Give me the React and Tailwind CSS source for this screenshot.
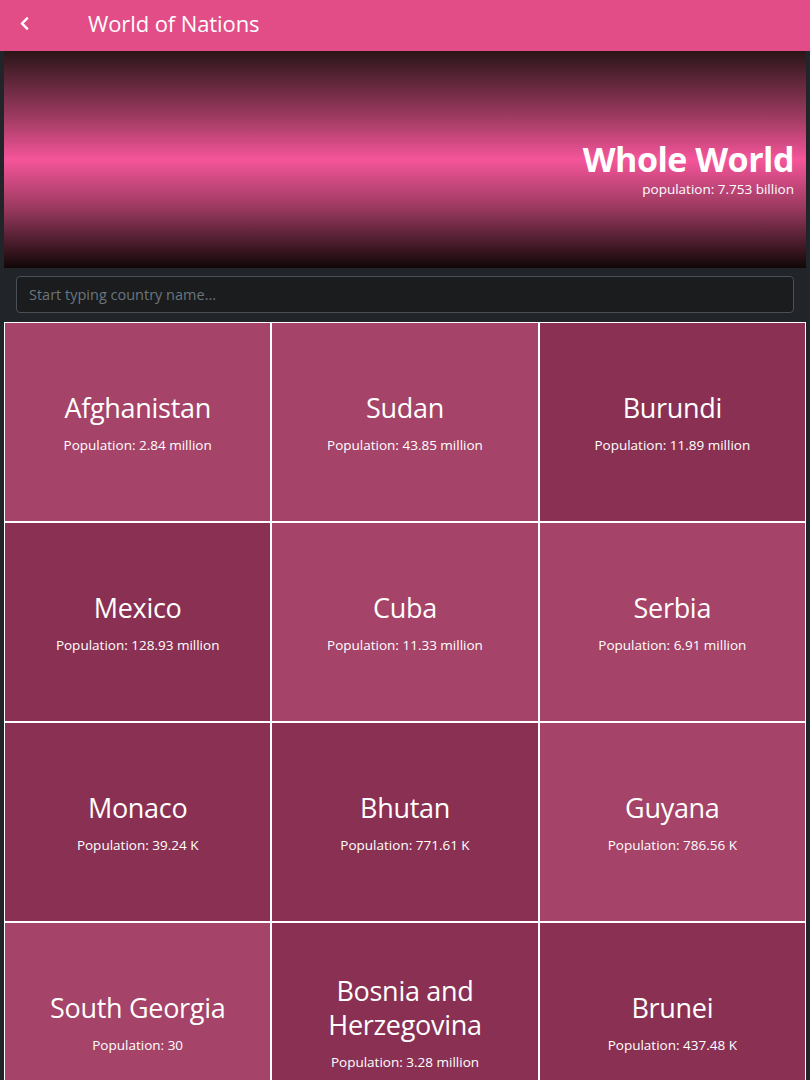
import { FaChevronLeft } from "react-icons/fa";

const COUNTRIES = [
    { name: "Afghanistan", pop: "2.84 million", dark: false },
    { name: "Sudan", pop: "43.85 million", dark: false },
    { name: "Burundi", pop: "11.89 million", dark: true },
    { name: "Mexico", pop: "128.93 million", dark: true },
    { name: "Cuba", pop: "11.33 million", dark: false },
    { name: "Serbia", pop: "6.91 million", dark: false },
    { name: "Monaco", pop: "39.24 K", dark: true },
    { name: "Bhutan", pop: "771.61 K", dark: true },
    { name: "Guyana", pop: "786.56 K", dark: false },
    { name: "South Georgia", pop: "30", dark: false },
    { name: "Bosnia and Herzegovina", pop: "3.28 million", dark: true },
    { name: "Brunei", pop: "437.48 K", dark: true },
];

function CountryCard({ country }) {
    return (
        <div
            className={`h-[200px] border border-white flex flex-col items-center justify-center text-center px-[12px] text-white ${
                country.dark ? "bg-[#8a3153]" : "bg-[#a64368]"
            }`}
        >
            <h3 className="text-[27px] leading-[34px] font-normal tracking-[-0.3px] mt-[3px]">{country.name}</h3>
            <p className="text-[13.5px] mt-[10px] whitespace-nowrap">Population: {country.pop}</p>
        </div>
    );
}

export default function App() {
    return (
        <div
            className="min-h-[1080px] bg-[#212529] text-white"
            style={{ fontFamily: '"Open Sans", "Noto Sans", sans-serif' }}
        >
            <header className="h-[51px] bg-[#e24d87] flex items-center pb-[5px]">
                <button className="w-[48px] flex justify-center text-white">
                    <FaChevronLeft size={15} />
                </button>
                <h1 className="ml-[40px] text-[22px] tracking-[-0.1px]">World of Nations</h1>
            </header>

            <div className="px-[4px]">
                <div className="h-[217px] bg-[linear-gradient(to_bottom,#2a1518_0%,#9c3a60_30%,#f5559a_50%,#9c3a60_72%,#100707_100%)] flex flex-col items-end justify-center pr-[12px] pt-[18px]">
                    <h2 className="text-[34px] font-bold leading-[41px] tracking-[-0.5px]">Whole World</h2>
                    <p className="text-[13.5px] leading-[18px]">population: 7.753 billion</p>
                </div>

                <div className="px-[12px] pt-[8px] pb-[9px]">
                    <input
                        type="text"
                        placeholder="Start typing country name..."
                        className="w-full h-[37px] rounded-[4px] border border-[#495057] bg-[#1a1c1e] px-[12px] text-[14.5px] text-white placeholder:text-[#6c757d] outline-none"
                    />
                </div>

                <div className="grid grid-cols-3">
                    {COUNTRIES.map((c) => (
                        <CountryCard key={c.name} country={c} />
                    ))}
                </div>
            </div>
        </div>
    );
}
